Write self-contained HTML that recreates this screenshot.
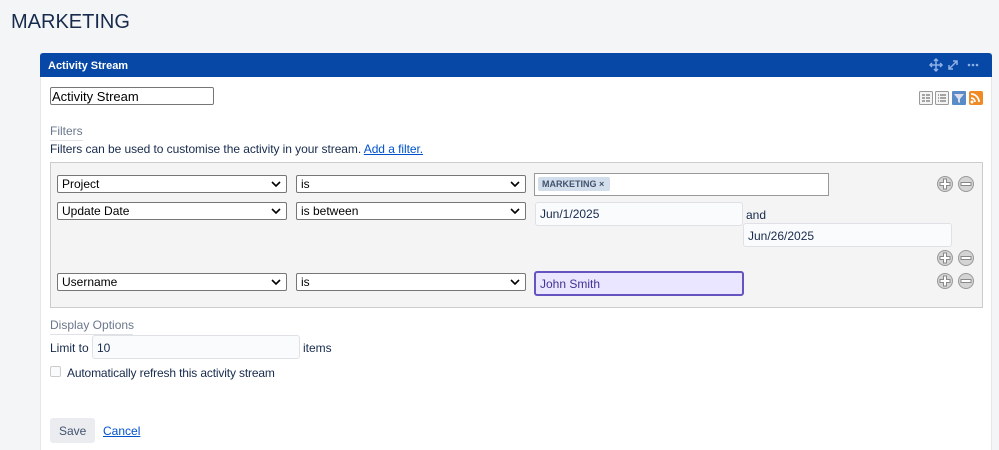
<!DOCTYPE html>
<html><head><meta charset="utf-8"><style>
*{box-sizing:border-box;margin:0;padding:0}
body{width:999px;height:450px;overflow:hidden;background:#f4f5f7;font-family:"Liberation Sans",Arial,sans-serif;font-size:12px;color:#172b4d;position:relative}
.a{position:absolute;white-space:nowrap}
.sel{position:absolute;height:18px;background:#fff;border:1px solid #767676;border-radius:2px;font-size:12px;color:#000;padding:1px 0 0 4px}
.sel svg{position:absolute;right:5px;top:5px}
.inp{position:absolute;border:1px solid #dfe1e6;background:#fafbfc;border-radius:3px;font-size:12px;color:#172b4d;padding-left:4px}
.pm{position:absolute;width:16px;height:16px}
</style></head><body>
<div class="a" style="left:11px;top:11px;font-size:20px;color:#172b4d">MARKETING</div>
<div class="a" style="left:40px;top:53px;width:952px;height:397px;background:#fff;border-left:1px solid #e4e6ea;border-right:1px solid #e4e6ea"></div>
<div class="a" style="left:40px;top:53px;width:952px;height:24px;background:#0747a6;border-radius:3px 3px 0 0;color:#fff;font-weight:bold;font-size:11px;padding:7px 0 0 8px">Activity Stream</div>
<svg class="a" style="left:929px;top:58px" width="50" height="14" viewBox="0 0 50 14">
<g fill="none" stroke="#8fb0e6" stroke-width="1.5"><path d="M7 1v12M1 7h12"/><path d="M5 3l2-2 2 2M5 11l2 2 2-2M3 5l-2 2 2 2M11 5l2 2-2 2"/>
<path d="M20 11l8-8M24 3h4v4M20 7v4h4"/></g>
<circle cx="40" cy="7" r="1.3" fill="#8fb0e6"/><circle cx="44" cy="7" r="1.3" fill="#8fb0e6"/><circle cx="48" cy="7" r="1.3" fill="#8fb0e6"/></svg>
<div class="a" style="left:50px;top:87px;width:164px;height:18px;border:1px solid #767676;border-radius:2px;font-size:13px;color:#000;padding:1px 0 0 1px">Activity Stream</div>
<svg class="a" style="left:919px;top:90px" width="65" height="16" viewBox="0 0 65 16">
<rect x=".5" y="1.5" width="13" height="13" rx="1" fill="#f4f4f4" stroke="#999"/><path d="M3 5h3M3 8h3M3 11h3M7 5h4M7 8h4M7 11h4" stroke="#555"/>
<rect x="16.5" y="1.5" width="13" height="13" rx="1" fill="#f4f4f4" stroke="#999"/><path d="M19 5h1M19 8h1M19 11h1M21 5h6M21 8h6M21 11h6" stroke="#555"/>
<rect x="33" y="1" width="14" height="14" rx="1" fill="#5b8bc6"/><path d="M35 4h10l-4 5v4l-2-1v-3z" fill="#dde"/>
<rect x="50" y="1" width="14" height="14" rx="2" fill="#f08a24"/><circle cx="53" cy="12" r="1.5" fill="#fff"/><path d="M52 8a4 4 0 0 1 4 4M52 4a8 8 0 0 1 8 8" stroke="#fff" stroke-width="1.8" fill="none"/></svg>
<div class="a" style="left:50px;top:124px;font-size:12px;color:#6b778c;border-bottom:1px solid #dfe1e6;padding-bottom:2px;width:33px">Filters</div>
<div class="a" style="left:50px;top:142px;font-size:12px;color:#172b4d;letter-spacing:-0.06px">Filters can be used to customise the activity in your stream. <span style="color:#0052cc;text-decoration:underline">Add a filter.</span></div>
<div class="a" style="left:50px;top:162px;width:933px;height:146px;background:#f4f4f4;border:1px solid #ccc"></div>

<div class="sel" style="left:57px;top:175px;width:230px">Project<svg width="10" height="7"><path d="M1 1l4 4 4-4" stroke="#000" stroke-width="1.6" fill="none"/></svg></div>
<div class="sel" style="left:296px;top:175px;width:230px">is<svg width="10" height="7"><path d="M1 1l4 4 4-4" stroke="#000" stroke-width="1.6" fill="none"/></svg></div>
<div class="a" style="left:534px;top:173px;width:295px;height:23px;background:#fff;border:1px solid #999"></div>
<div class="a" style="left:538px;top:177px;width:72px;height:14px;background:#d2deeb;border-radius:2px;font-size:9px;font-weight:bold;color:#42526e;padding:2px 0 0 4px">MARKETING ×</div>

<div class="sel" style="left:57px;top:202px;width:230px">Update Date<svg width="10" height="7"><path d="M1 1l4 4 4-4" stroke="#000" stroke-width="1.6" fill="none"/></svg></div>
<div class="sel" style="left:296px;top:202px;width:230px">is between<svg width="10" height="7"><path d="M1 1l4 4 4-4" stroke="#000" stroke-width="1.6" fill="none"/></svg></div>
<div class="inp" style="left:535px;top:202px;width:208px;height:24px;padding-top:4px">Jun/1/2025</div>
<div class="a" style="left:746px;top:208px;font-size:12px;color:#172b4d">and</div>
<div class="inp" style="left:743px;top:223px;width:209px;height:24px;padding-top:5px">Jun/26/2025</div>

<div class="sel" style="left:57px;top:273px;width:230px">Username<svg width="10" height="7"><path d="M1 1l4 4 4-4" stroke="#000" stroke-width="1.6" fill="none"/></svg></div>
<div class="sel" style="left:296px;top:273px;width:230px">is<svg width="10" height="7"><path d="M1 1l4 4 4-4" stroke="#000" stroke-width="1.6" fill="none"/></svg></div>
<div class="inp" style="left:534px;top:271px;width:210px;height:25px;background:#eae6ff;border:2px solid #6554c0;color:#403294;padding-top:4px">John Smith</div>

<svg width="0" height="0" style="position:absolute"><defs>
<g id="p"><circle cx="8" cy="8" r="7.5" fill="#d4d4d4" stroke="#999"/><path d="M6.5 3h3v3.5H13v3H9.5V13h-3V9.5H3v-3h3.5z" fill="#fff" stroke="#888" stroke-width="1"/></g>
<g id="m"><circle cx="8" cy="8" r="7.5" fill="#d4d4d4" stroke="#999"/><rect x="3" y="6.5" width="10" height="3" fill="#fff" stroke="#888" stroke-width="1"/></g></defs></svg>
<svg class="pm" style="left:937px;top:176px"><use href="#p"/></svg><svg class="pm" style="left:958px;top:176px"><use href="#m"/></svg>
<svg class="pm" style="left:937px;top:250px"><use href="#p"/></svg><svg class="pm" style="left:958px;top:250px"><use href="#m"/></svg>
<svg class="pm" style="left:937px;top:273px"><use href="#p"/></svg><svg class="pm" style="left:958px;top:273px"><use href="#m"/></svg>

<div class="a" style="left:50px;top:318px;font-size:12px;color:#6b778c;border-bottom:1px solid #dfe1e6;padding-bottom:2px;width:83px">Display Options</div>
<div class="a" style="left:50px;top:341px;font-size:12px">Limit to</div>
<div class="inp" style="left:92px;top:335px;width:208px;height:24px;border:1px solid #dfe1e6;padding-top:5px">10</div>
<div class="a" style="left:303px;top:341px;font-size:12px">items</div>
<div class="a" style="left:50px;top:366px;width:11px;height:11px;border:1px solid #ccc;border-radius:2px;background:#fafbfc"></div>
<div class="a" style="left:67px;top:366px;font-size:12px;letter-spacing:-0.15px">Automatically refresh this activity stream</div>
<div class="a" style="left:50px;top:418px;width:45px;height:25px;background:#ebecf0;border-radius:3px;font-size:12px;color:#42526e;padding:6px 0 0 9px">Save</div>
<div class="a" style="left:103px;top:424px;font-size:12px;color:#0052cc;text-decoration:underline">Cancel</div>
</body></html>
